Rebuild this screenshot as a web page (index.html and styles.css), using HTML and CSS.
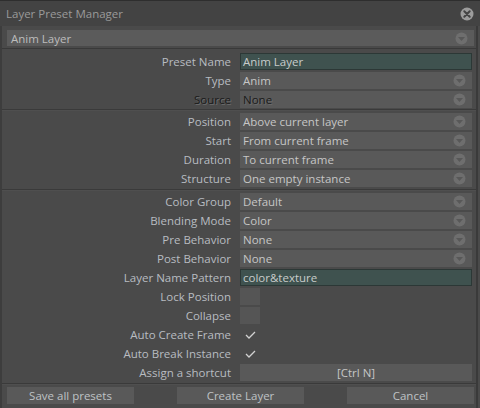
FILE: index.html
```html
<!DOCTYPE html>
<html>
<head>
<meta charset="utf-8">
<link rel="stylesheet" href="styles.css">
</head>
<body>
<div class="window">
  <div class="titlebar">
    <span class="title">Layer Preset Manager</span>
    <svg class="close" width="14" height="14" viewBox="0 0 14 14"><circle cx="7" cy="7" r="6.5" fill="#9c9c9c"/><path d="M4.3 4.3 L9.7 9.7 M9.7 4.3 L4.3 9.7" stroke="#444" stroke-width="2" stroke-linecap="round"/></svg>
  </div>
  <div class="main">
    <div class="top">
      <div class="combo top-combo"><span>Anim Layer</span><svg class="arrow" width="13" height="13" viewBox="0 0 13 13"><circle cx="6.5" cy="6.5" r="6" fill="#6e6e6e"/><path d="M3 5 L10 5 L6.5 9 Z" fill="#585858"/></svg></div>
    </div>
    <div class="group">
      <div class="row"><div class="label">Preset Name</div><div class="field text">Anim Layer</div></div>
      <div class="row"><div class="label">Type</div><div class="field combo"><span>Anim</span><svg class="arrow" width="13" height="13" viewBox="0 0 13 13"><circle cx="6.5" cy="6.5" r="6" fill="#6e6e6e"/><path d="M3 5 L10 5 L6.5 9 Z" fill="#585858"/></svg></div></div>
      <div class="row"><div class="label dim">Source</div><div class="field combo"><span class="dim">None</span><svg class="arrow" width="13" height="13" viewBox="0 0 13 13"><circle cx="6.5" cy="6.5" r="6" fill="#6e6e6e"/><path d="M3 5 L10 5 L6.5 9 Z" fill="#585858"/></svg></div></div>
    </div>
    <div class="sep"></div>
    <div class="group">
      <div class="row"><div class="label">Position</div><div class="field combo"><span>Above current layer</span><svg class="arrow" width="13" height="13" viewBox="0 0 13 13"><circle cx="6.5" cy="6.5" r="6" fill="#6e6e6e"/><path d="M3 5 L10 5 L6.5 9 Z" fill="#585858"/></svg></div></div>
      <div class="row"><div class="label">Start</div><div class="field combo"><span>From current frame</span><svg class="arrow" width="13" height="13" viewBox="0 0 13 13"><circle cx="6.5" cy="6.5" r="6" fill="#6e6e6e"/><path d="M3 5 L10 5 L6.5 9 Z" fill="#585858"/></svg></div></div>
      <div class="row"><div class="label">Duration</div><div class="field combo"><span>To current frame</span><svg class="arrow" width="13" height="13" viewBox="0 0 13 13"><circle cx="6.5" cy="6.5" r="6" fill="#6e6e6e"/><path d="M3 5 L10 5 L6.5 9 Z" fill="#585858"/></svg></div></div>
      <div class="row"><div class="label">Structure</div><div class="field combo"><span>One empty instance</span><svg class="arrow" width="13" height="13" viewBox="0 0 13 13"><circle cx="6.5" cy="6.5" r="6" fill="#6e6e6e"/><path d="M3 5 L10 5 L6.5 9 Z" fill="#585858"/></svg></div></div>
    </div>
    <div class="sep sep2"></div>
    <div class="group">
      <div class="row"><div class="label">Color Group</div><div class="field combo"><span>Default</span><svg class="arrow" width="13" height="13" viewBox="0 0 13 13"><circle cx="6.5" cy="6.5" r="6" fill="#6e6e6e"/><path d="M3 5 L10 5 L6.5 9 Z" fill="#585858"/></svg></div></div>
      <div class="row"><div class="label">Blending Mode</div><div class="field combo"><span>Color</span><svg class="arrow" width="13" height="13" viewBox="0 0 13 13"><circle cx="6.5" cy="6.5" r="6" fill="#6e6e6e"/><path d="M3 5 L10 5 L6.5 9 Z" fill="#585858"/></svg></div></div>
      <div class="row"><div class="label">Pre Behavior</div><div class="field combo"><span>None</span><svg class="arrow" width="13" height="13" viewBox="0 0 13 13"><circle cx="6.5" cy="6.5" r="6" fill="#6e6e6e"/><path d="M3 5 L10 5 L6.5 9 Z" fill="#585858"/></svg></div></div>
      <div class="row"><div class="label">Post Behavior</div><div class="field combo"><span>None</span><svg class="arrow" width="13" height="13" viewBox="0 0 13 13"><circle cx="6.5" cy="6.5" r="6" fill="#6e6e6e"/><path d="M3 5 L10 5 L6.5 9 Z" fill="#585858"/></svg></div></div>
      <div class="row"><div class="label">Layer Name Pattern</div><div class="field text">color&amp;texture</div></div>
      <div class="row"><div class="label">Lock Position</div><div class="check box"></div></div>
      <div class="row"><div class="label">Collapse</div><div class="check box"></div></div>
      <div class="row"><div class="label">Auto Create Frame</div><div class="check"><svg width="12" height="10" viewBox="0 0 12 10"><path d="M2 5 L5 8 L11 2" fill="none" stroke="#d2d2d2" stroke-width="1.3"/></svg></div></div>
      <div class="row"><div class="label">Auto Break Instance</div><div class="check"><svg width="12" height="10" viewBox="0 0 12 10"><path d="M2 5 L5 8 L11 2" fill="none" stroke="#d2d2d2" stroke-width="1.3"/></svg></div></div>
      <div class="row"><div class="label">Assign a shortcut</div><div class="field shortcut">[Ctrl N]</div></div>
    </div>
    <div class="sep bottom-sep"></div>
    <div class="buttons">
      <div class="btn">Save all presets</div>
      <div class="btn">Create Layer</div>
      <div class="btn">Cancel</div>
    </div>
  </div>
</div>
</body>
</html>
```

FILE: styles.css
```css
* { box-sizing: border-box; }
html, body { margin: 0; padding: 0; }
body {
  background: #4a4a4a;
  font-family: "Open Sans", "Noto Sans", sans-serif;
  font-size: 11.5px;
  color: #b9bcc0;
}
.window {
  width: 480px;
  height: 408px;
  background: #4a4a4a;
  border-top: 1px solid #2e2e2e;
  display: flex;
  flex-direction: column;
}
.titlebar {
  height: 25px;
  background: #434343;
  display: flex;
  align-items: center;
  justify-content: space-between;
  padding: 0 6px 0 6px;
}
.title { color: #9a9a9a; font-size: 11.5px; }
.close { display: block; margin-top: 1px; }
.main {
  flex: 1;
  border-left: 2px solid #3d3d3d;
  border-right: 2px solid #3a3a3a;
  margin-right: 2px;
  display: flex;
  flex-direction: column;
}
.top {
  padding: 4px 2px 2px 5px;
  border-bottom: 1px solid #393939;
}
.combo {
  display: flex;
  align-items: center;
  justify-content: space-between;
  background: #595959;
  padding: 0 6px 0 3px;
  color: #c6c6c6;
}
.top-combo {
  height: 16px;
  background: #5b5b5b;
  color: #bdbdbd;
  padding-left: 4px;
}
.arrow { display: block; }
.group {
  display: flex;
  flex-direction: column;
  gap: 2px;
}
.main > .group:nth-child(2) { margin-top: 4px; }
.row {
  display: flex;
  align-items: center;
  height: 17px;
  gap: 9px;
}
.label {
  width: 229px;
  text-align: right;
  white-space: nowrap;
  color: #b8bcc1;
}
.field {
  width: 232px;
  height: 17px;
}
.text {
  background: #3f524f;
  border: 1px solid #2c3836;
  color: #c8cccb;
  padding-left: 2px;
  line-height: 15px;
}
.dim {
  color: #1a1a1a;
  text-shadow: 1px 1px 0 #6c6c6c;
}
.check {
  width: 20px;
  height: 17px;
  display: flex;
  align-items: center;
  justify-content: center;
}
.check.box { background: #555555; }
.shortcut {
  background: #595959;
  color: #c6c6c6;
  text-align: center;
  line-height: 17px;
}
.sep {
  height: 2px;
  margin: 1px 0 2px 0;
  border-top: 1px solid #3a3a3a;
  border-bottom: 1px solid #4f4f4f;
}
.sep2 { margin: 2px 0 2px 0; }
.bottom-sep { margin: 2px 0 2px 0; }
.buttons {
  display: flex;
  justify-content: space-between;
  padding: 0 2px 0 5px;
}
.btn {
  width: 127px;
  height: 17px;
  background: #595959;
  color: #bfc2c5;
  text-align: center;
  line-height: 17px;
}
```
